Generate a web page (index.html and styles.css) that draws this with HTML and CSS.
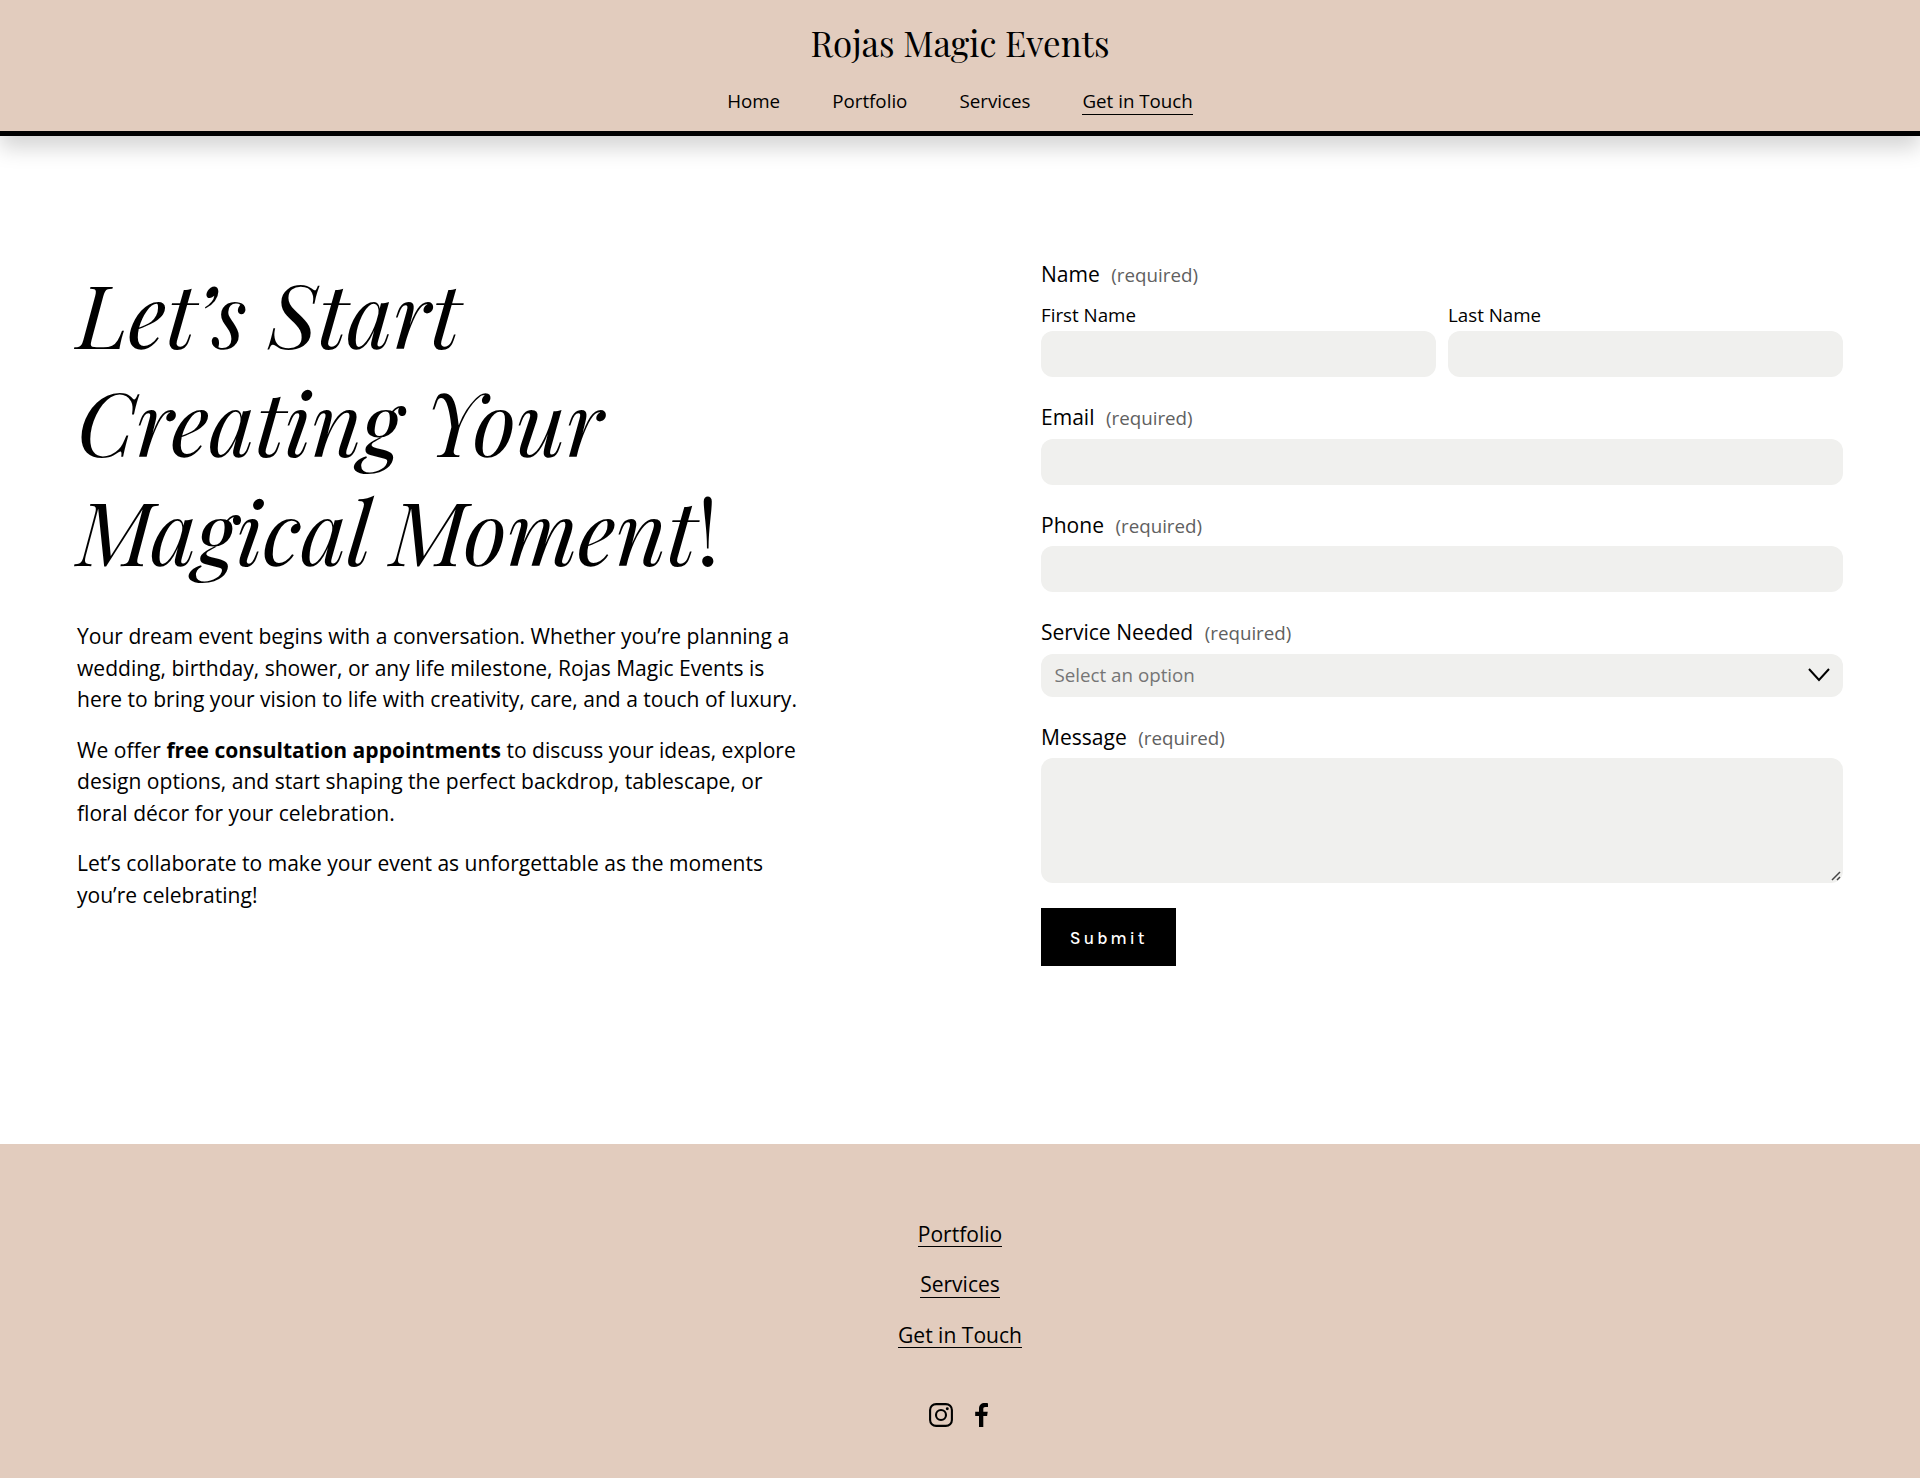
FILE: index.html
```html
<!DOCTYPE html>
<html lang="en">

<head>
  <meta charset="UTF-8">
  <meta name="viewport" content="width=device-width, initial-scale=1.0">
  <title>Get in Touch - Rojas Magic Events</title>
  <link rel="stylesheet" href="styles.css">
</head>

<body>

  <header class="header">
    <a class="logo" href="#">Rojas Magic Events</a>
    <nav class="nav">
      <a href="#">Home</a>
      <a href="#">Portfolio</a>
      <a href="#">Services</a>
      <a class="active" href="#">Get in Touch</a>
    </nav>
  </header>

  <main class="contact">
    <section class="intro">
      <h1>
        <em>Let’s Start</em><br>
        <em>Creating Your</em><br>
        <em>Magical Moment</em>!
      </h1>
      <p>Your dream event begins with a conversation. Whether you’re planning a wedding, birthday, shower, or any life milestone, Rojas Magic Events is here to bring your vision to life with creativity, care, and a touch of luxury.</p>
      <p>We offer <strong>free consultation appointments</strong> to discuss your ideas, explore design options, and start shaping the perfect backdrop, tablescape, or floral décor for your celebration.</p>
      <p>Let’s collaborate to make your event as unforgettable as the moments you’re celebrating!</p>
    </section>

    <form class="form">
      <div class="field">
        <div class="label">Name <span>(required)</span></div>
        <div class="names">
          <label>First Name<input type="text"></label>
          <label>Last Name<input type="text"></label>
        </div>
      </div>
      <div class="field">
        <label class="label" for="email">Email <span>(required)</span></label>
        <input id="email" type="email">
      </div>
      <div class="field">
        <label class="label" for="phone">Phone <span>(required)</span></label>
        <input id="phone" type="tel">
      </div>
      <div class="field">
        <label class="label" for="service">Service Needed <span>(required)</span></label>
        <div class="control">
          <select id="service">
            <option>Select an option</option>
          </select>
          <svg class="chevron" width="22" height="14" viewBox="0 0 22 14">
            <path d="M1 1 L11 12 L21 1" fill="none" stroke="#000" stroke-width="2" />
          </svg>
        </div>
      </div>
      <div class="field">
        <label class="label" for="message">Message <span>(required)</span></label>
        <div class="control">
          <textarea id="message"></textarea>
          <svg class="grip" width="10" height="10" viewBox="0 0 10 10">
            <path d="M1 9 L9 1 M6 9 L9 6" fill="none" stroke="#444" stroke-width="1.5" />
          </svg>
        </div>
      </div>
      <button type="button">Submit</button>
    </form>
  </main>

  <footer class="footer">
    <p><a href="#">Portfolio</a></p>
    <p><a href="#">Services</a></p>
    <p><a href="#">Get in Touch</a></p>
    <div class="social">
      <a href="#" aria-label="Instagram">
        <svg width="24" height="24" viewBox="0 0 24 24">
          <rect x="1.1" y="1.1" width="21.8" height="21.8" rx="6" fill="none" stroke="#000" stroke-width="2.1" />
          <circle cx="12" cy="12" r="5" fill="none" stroke="#000" stroke-width="2.1" />
          <circle cx="18.3" cy="5.7" r="1.45" />
        </svg>
      </a>
      <a href="#" aria-label="Facebook">
        <svg width="13" height="24" viewBox="0 0 13 24">
          <path d="M8.3 24V13.1h3.8l.6-4.3H8.3V6.1c0-1.3.4-2.1 2.2-2.1H13V.2C12.6.1 11.2 0 9.7 0 6.3 0 4 2 4 5.7v3.1H.2v4.3H4V24z" />
        </svg>
      </a>
    </div>
  </footer>

</body>

</html>
```
FILE: styles.css
```css
* {
  box-sizing: border-box;
}

body {
  margin: 0;
  background-color: white;
  color: black;
  font-family: "Open Sans", sans-serif;
  font-size: 21.05px;
  line-height: 31.4px;
}

a {
  color: black;
  text-decoration: none;
}

.header {
  position: relative;
  display: flex;
  flex-direction: column;
  align-items: center;
  height: 136px;
  padding-top: 19px;
  background-color: #e2ccbe;
  border-bottom: 5px solid black;
  box-shadow: 0 12px 20px rgba(0, 0, 0, .17);
}

.logo {
  font-family: "Playfair Display", serif;
  font-size: 34.9px;
  line-height: 48px;
}

.nav {
  display: flex;
  gap: 52px;
  margin-top: 21px;
  font-size: 18.75px;
  line-height: 26px;
}

.nav a {
  border-bottom: 1px solid transparent;
}

.nav .active {
  border-color: black;
}

.contact {
  display: grid;
  grid-template-columns: 740px 802px;
  justify-content: space-between;
  height: 1008px;
  padding: 122px 77px 0;
}

h1 {
  margin: 1px 0 37px;
  font-family: "Playfair Display", serif;
  font-size: 87.9px;
  font-weight: 400;
  line-height: 108.4px;
  white-space: nowrap;
}

.intro p {
  width: 728px;
  margin: 0 0 19.4px;
}

.form {
  margin-top: 1px;
}

.field {
  margin-bottom: 25px;
}

.label {
  display: block;
  margin-bottom: 5.2px;
}

.label span {
  margin-left: 6px;
  font-size: 18.75px;
  color: #606060;
}

.names {
  display: grid;
  grid-template-columns: 1fr 1fr;
  gap: 12px;
  padding-top: 5.1px;
  font-size: 18.75px;
  line-height: 28px;
}

.names input {
  margin-top: 2.3px;
}

input,
select,
textarea {
  display: block;
  width: 100%;
  height: 46px;
  padding: 0 13.5px;
  border: 0;
  border-radius: 12px;
  background-color: #f0f0ee;
  font-family: inherit;
  font-size: 18.75px;
}

.control {
  position: relative;
}

select {
  height: 43px;
  padding-bottom: 2px;
  appearance: none;
  color: #757575;
}

/* arrow sits on top of the select */
.chevron {
  position: absolute;
  top: 14.5px;
  right: 13px;
}

textarea {
  height: 125px;
  resize: none;
}

.grip {
  position: absolute;
  right: 2px;
  bottom: 2px;
}

button {
  display: block;
  width: 135px;
  height: 58px;
  padding: 2px 6px 0;
  border: 0;
  background-color: black;
  color: white;
  font-family: Karla, Inter, sans-serif;
  font-size: 17.6px;
  font-weight: 500;
  letter-spacing: 2.7px;
}

.footer {
  display: flex;
  flex-direction: column;
  align-items: center;
  height: 334px;
  padding-top: 74.6px;
  background-color: #e2ccbe;
}

.footer p {
  margin: 0 0 19.2px;
}

.footer p a {
  display: block;
  height: 28.4px;
  margin-bottom: 3px;
  border-bottom: 1px solid black;
}

.social {
  display: flex;
  gap: 22px;
  margin: 32.6px 4px 0 0;
}

.social svg {
  display: block;
}
```
